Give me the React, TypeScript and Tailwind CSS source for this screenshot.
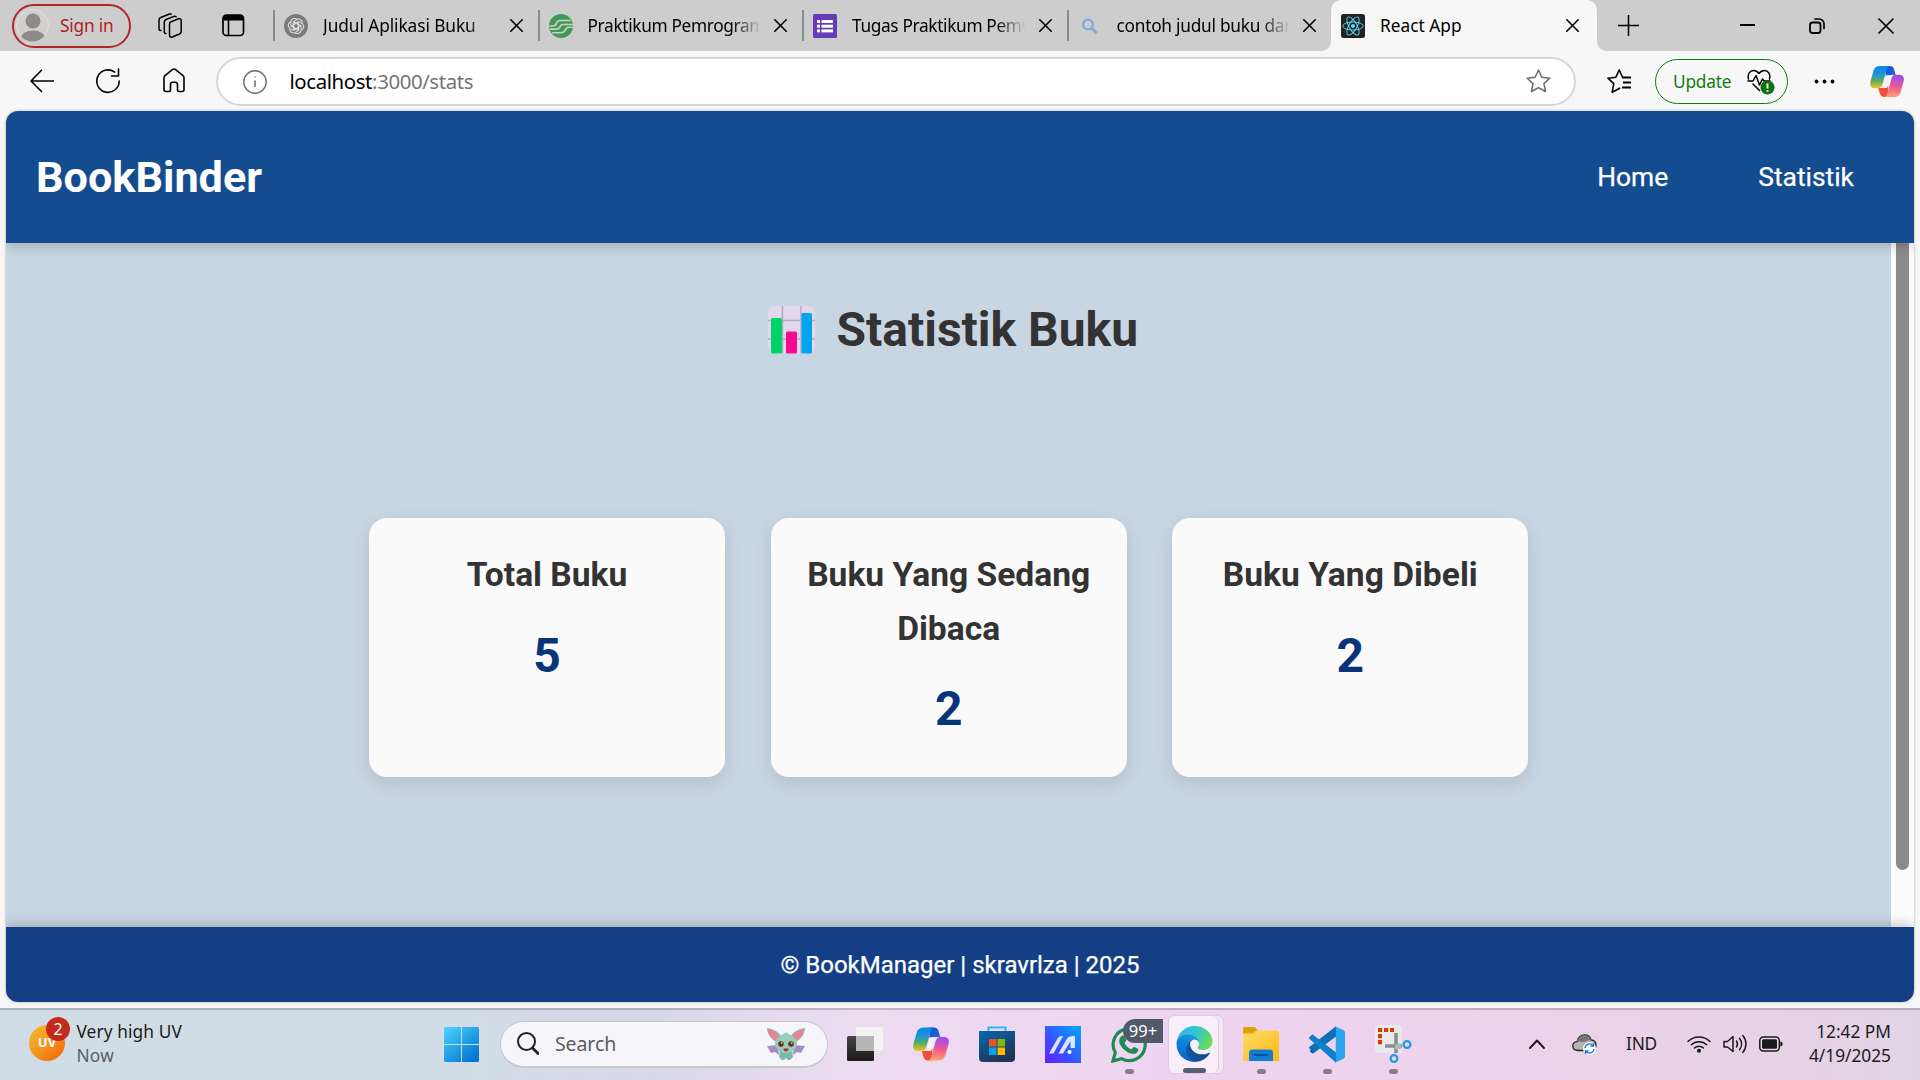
import React from 'react';

const stroke = { fill: 'none', stroke: '#000', strokeWidth: 1.6, strokeLinecap: 'round' as const, strokeLinejoin: 'round' as const };

function Cross({ s = 13, w = 1.6 }: { s?: number; w?: number }) {
  return (
    <svg width={s} height={s} viewBox="0 0 13 13" className="shrink-0">
      <path d="M.8.8 12.2 12.2M12.2.8.8 12.2" {...stroke} strokeWidth={w} />
    </svg>
  );
}

function Copilot({ id, className }: { id: string; className: string }) {
  return (
    <svg viewBox="0 0 34 31" className={className}>
      <defs>
        <linearGradient id={id + 'a'} x1="0" y1="0" x2="0" y2="1">
          <stop offset="0" stopColor="#0a86e0" />
          <stop offset=".35" stopColor="#1b93dd" />
          <stop offset=".65" stopColor="#55ab6a" />
          <stop offset="1" stopColor="#f5c518" />
        </linearGradient>
        <linearGradient id={id + 'b'} x1=".2" y1="0" x2=".1" y2="1">
          <stop offset="0" stopColor="#9e4be8" />
          <stop offset=".5" stopColor="#ee5a90" />
          <stop offset="1" stopColor="#ffa764" />
        </linearGradient>
        <linearGradient id={id + 'c'} x1="0" y1="0" x2="1" y2="1">
          <stop offset="0" stopColor="#0f4fd0" />
          <stop offset="1" stopColor="#2a6be0" />
        </linearGradient>
      </defs>
      <path d="M15 0h5c2.600 0 3.600 1.600 4.300 3.900L25.700 9h-5c-2.500 0-4 .9-4.700 3.500Z" fill={`url(#${id}c)`} />
      <path d="M19 31h-5c-2.600 0-3.600-1.600-4.300-3.900L8.300 22h5c2.500 0 4-.9 4.700-3.500Z" fill="#ee4f3a" />
      <path d="M10 0h10c-2 .4-3 2-3.700 4.500l-3.500 13c-.9 3.300-2.200 4.700-5 4.700H4.500C1 22.200-.6 19.500.4 15.500l3-10.500C4.300 1.800 6.500 0 10 0Z" fill={`url(#${id}a)`} />
      <path d="M24 31H14c2-.4 3-2 3.700-4.500l3.500-13c.9-3.300 2.200-4.700 5-4.700h3.300c3.500 0 5.100 2.700 4.100 6.700l-3 10.500C29.700 29.200 27.500 31 24 31Z" fill={`url(#${id}b)`} />
      <path d="M16.800 9.200h2.700c.8 0 1.200.5 1 1.200l-3 10.600c-.2.700-.6 1-1.300 1h-2.700c-.7 0-1-.5-.8-1.200l3-10.600c.2-.7.500-1 1.100-1Z" fill="#f5f0fa" />
    </svg>
  );
}

function GptIcon() {
  return (
    <svg width="24" height="24" viewBox="0 0 24 24">
      <circle cx="12" cy="12" r="12" fill="#7b7b7b" />
      <g fill="none" stroke="#dedede" strokeWidth="1.05">
        {[0, 60, 120, 180, 240, 300].map((a) => (
          <path key={a} transform={`rotate(${a} 12 12)`} d="M9.300 13.600V7.800L12.700 5.600c2.700-1.500 6 .6 5.600 3.900M9.300 7.800 14.500 10.700" />
        ))}
      </g>
    </svg>
  );
}

function CampusIcon() {
  return (
    <svg width="24" height="24" viewBox="0 0 24 24">
      <circle cx="12" cy="12" r="12" fill="#3f9a56" />
      <g fill="none" stroke="#cdcdcd" strokeWidth="1.600">
        <path d="M22 6.500H12c-3 0-4 1-4.500 2.800S6 12 3.500 12H0" />
        <path d="M24 10.500h-9.500c-2.500 0-3 .8-3.500 2.300s-1.500 2.300-4 2.300H1" />
        <path d="M24 13.300h-4c-2.500 0-3 .8-3.500 2.500s-2 2.900-4.500 2.900H3" />
      </g>
    </svg>
  );
}

function FormsIcon() {
  return (
    <svg width="24" height="24" viewBox="0 0 24 24">
      <rect width="24" height="24" rx="1.500" fill="#673ab7" />
      <g fill="#fff">
        {[6, 10.700, 15.400].map((y) => (
          <g key={y}>
            <rect x="4" y={y} width="3" height="3" />
            <rect x="8.500" y={y} width="11.500" height="3" />
          </g>
        ))}
      </g>
    </svg>
  );
}

function ReactIcon() {
  return (
    <svg width="24" height="24" viewBox="0 0 24 24">
      <rect width="24" height="24" rx="2.500" fill="#222" />
      <g fill="none" stroke="#61dafb" strokeWidth=".9">
        {[0, 60, 120].map((a) => (
          <ellipse key={a} cx="12" cy="12" rx="10.300" ry="4" transform={`rotate(${a} 12 12)`} />
        ))}
      </g>
      <circle cx="12" cy="12" r="2" fill="#61dafb" />
    </svg>
  );
}

function SearchFavicon() {
  return (
    <svg width="24" height="24" viewBox="0 0 24 24">
      <circle cx="10" cy="10.500" r="4.900" fill="none" stroke="#7fabd6" strokeWidth="2.200" />
      <path d="m13.500 14 5.200 5.200" stroke="#7fabd6" strokeWidth="2.800" />
    </svg>
  );
}

const tabs = [
  { title: 'Judul Aplikasi Buku', icon: <GptIcon />, track: 'tracking-[-0.08px]' },
  { title: 'Praktikum Pemrogram', icon: <CampusIcon />, track: 'tracking-[-0.35px]' },
  { title: 'Tugas Praktikum Pemw', icon: <FormsIcon />, track: 'tracking-[-0.35px]' },
  { title: 'contoh judul buku dan', icon: <SearchFavicon />, track: 'tracking-[-0.25px]' },
];

function TabStrip() {
  return (
    <div className="flex h-[51px] bg-[#cdcdcd] text-[17.300px] text-black">
      <div className="flex w-[273px] shrink-0 items-center pl-3">
        <div className="flex h-[44px] w-[119px] items-center rounded-full border-2 border-[#b3272b] pl-[3px] text-[#ad1f24]">
          <svg className="-ml-[1px]" width="33" height="33" viewBox="0 0 33 33">
            <defs><clipPath id="av"><circle cx="16.500" cy="16.500" r="16" /></clipPath></defs>
            <circle cx="16.500" cy="16.500" r="16" fill="#d2d0ce" stroke="#e3e1df" />
            <g clipPath="url(#av)" fill="#8d8a88">
              <circle cx="17" cy="12" r="7.500" />
              <ellipse cx="17" cy="29" rx="12" ry="7.500" />
            </g>
          </svg>
          <span className="ml-[11px] whitespace-nowrap tracking-[-0.2px]">Sign in</span>
        </div>
        <svg className="ml-[27px]" width="24" height="26" viewBox="0 0 24 26">
          <g {...stroke} strokeWidth="1.500">
            <path d="m12.500 9 8-3.200c1.500-.5 2.700.2 2.700 1.700v11c0 1.200-.5 2-1.700 2.500l-7.200 3c-1.600.6-2.800-.1-2.800-1.700V11c0-1 .3-1.600 1-2Z" />
            <path d="M8 20.500c-1 0-1.700-.7-1.700-1.800V9c0-1.200.5-2 1.700-2.500L16 3.400c.8-.3 1.600-.1 2.100.4" />
            <path d="M3 17.500c-1.300 0-2-.7-2-1.800V7c0-1.200.5-2 1.700-2.500L11.500 1c.7-.2 1.200-.1 1.700.2" />
          </g>
        </svg>
        <svg className="ml-[40px]" width="23" height="23" viewBox="0 0 23 23">
          <rect x="1" y="1" width="20.500" height="20.500" rx="3.500" {...stroke} strokeWidth="1.700" />
          <path d="M1 6.500V4a3 3 0 0 1 3-3h14.500a3 3 0 0 1 3 3v2.500Z" fill="#000" />
          <path d="M6.500 6v15" {...stroke} />
        </svg>
      </div>
      {tabs.map((t) => (
        <div key={t.title} className="flex w-[264.500px] shrink-0 items-center">
          <div className="h-[31px] w-[2px] bg-[#8a8a8a]" />
          <div className="ml-[9px] w-[24px]">{t.icon}</div>
          <div className={`ml-[15px] w-[175px] overflow-hidden whitespace-nowrap [mask-image:linear-gradient(to_right,#000_82%,transparent_99%)] ${t.track}`}>{t.title}</div>
          <div className="ml-[11.500px]"><Cross /></div>
        </div>
      ))}
      <div className="relative flex w-[266px] shrink-0 items-center rounded-t-[10px] bg-[#f7f7f7] pl-[10px]">
        <div className="absolute bottom-0 -left-[10px] h-[10px] w-[10px] bg-[radial-gradient(circle_at_0_0,transparent_9.500px,#f7f7f7_10.500px)]" />
        <div className="absolute -right-[10px] bottom-0 h-[10px] w-[10px] bg-[radial-gradient(circle_at_100%_0,transparent_9.500px,#f7f7f7_10.500px)]" />
        <ReactIcon />
        <div className="ml-[15px] w-[186px]">React App</div>
        <Cross />
      </div>
      <div className="flex flex-1 items-center">
        <svg className="-mt-[1px] ml-[21px]" width="21" height="21" viewBox="0 0 21 21"><path d="M10.500 0v21M0 10.500h21" stroke="#000" strokeWidth="1.500" /></svg>
        <div className="-mt-[1px] ml-[101px] h-[2px] w-[15px] bg-black" />
        <svg className="ml-[54px]" width="16" height="16" viewBox="0 0 16 16">
          <rect x="1" y="4.500" width="10.500" height="10.500" rx="2.500" {...stroke} strokeWidth="1.800" />
          <path d="M6 1h4a5 5 0 0 1 5 5v4.500" {...stroke} strokeWidth="1.700" />
        </svg>
        <div className="ml-[53px]"><Cross s={16} w={1.400} /></div>
      </div>
    </div>
  );
}

function Toolbar() {
  return (
    <div className="flex h-[60px] items-center bg-[#f7f7f7]">
      <div className="-mt-[1px] flex w-[216px] shrink-0 items-center pl-[30px]">
        <svg width="24" height="24" viewBox="0 0 24 24"><path d="M23.500 12H1M11.500 1.200 1 12l10.500 10.500" {...stroke} /></svg>
        <svg className="ml-[42px]" width="24" height="26" viewBox="0 0 24 26">
          <path d="M18.500 4A11.200 11.200 0 1 0 23.200 13" {...stroke} /><path d="M22.500 1v7h-7" {...stroke} />
        </svg>
        <svg className="ml-[43px]" width="22" height="25" viewBox="0 0 22 25">
          <path d="M1 9.800c0-.9.300-1.500 1-2.100l7.400-6.100c1-.8 2.200-.8 3.200 0L20 7.700c.7.600 1 1.200 1 2.100v11.700c0 1.300-.8 2-2 2h-3c-1 0-1.500-.6-1.500-1.500v-5.500c0-1.300-.8-2.200-2-2.200h-3c-1.200 0-2 .9-2 2.200V22c0 .9-.5 1.500-1.500 1.500H3c-1.200 0-2-.7-2-2Z" {...stroke} />
        </svg>
      </div>
      <div className="mt-[1px] flex h-[49px] w-[1360px] shrink-0 items-center rounded-full border-2 border-[#d6d6d6] bg-white">
        <svg className="ml-[25px]" width="24" height="24" viewBox="0 0 24 24">
          <circle cx="12" cy="12" r="11.200" {...stroke} stroke="#707070" strokeWidth="1.400" />
          <path d="M12 10.500V17M12 6.500v1" stroke="#707070" strokeWidth="1.600" />
        </svg>
        <div className="ml-[22.500px] w-[1236.500px] text-[20.400px] tracking-[-0.4px] text-[#757575]"><span className="text-black">localhost</span>:3000/stats</div>
        <svg className="-mt-[2px]" width="25" height="24" viewBox="0 0 25 24"><path d="m12.500 1 3.300 7.200 8 1-5.900 5.400 1.600 7.900-7-3.900-7 3.900L7 14.600 1.200 9.200l8-1Z" {...stroke} stroke="#6a6a6a" strokeWidth="1.500" /></svg>
      </div>
      <svg className="ml-[31px]" width="25" height="25" viewBox="0 0 25 25">
        <path d="m15.500 8-3.300-7-3.300 7.200-8 1 5.900 5.400-1.600 8.600 7.500-4" {...stroke} strokeWidth="1.600" />
        <path d="M15 8.500h9M16 13.500h8M15 18.500h9" stroke="#000" strokeWidth="1.800" />
      </svg>
      <div className="mt-[1px] ml-[23px] flex h-[45px] w-[133px] items-center rounded-full border-[1.500px] border-[#107c10] pl-[17px] text-[17.300px] text-[#107c10]">
        <span className="mt-[1px] w-[74px] tracking-[-0.2px]">Update</span>
        <svg width="28" height="26" viewBox="0 0 28 26">
          <g {...stroke} strokeWidth="1.500">
            <path d="M1.500 10C.2 5 3 1.500 6.500 1.500c2.500 0 4 1 5.500 3 1.500-2 3-3 5.500-3C21 1.500 23.800 5 22.500 10" />
            <path d="M1 12h5l3-5.500L12.500 16l3-6 1.500 2h6M6 15l6.500 6.500" />
          </g>
          <circle cx="20.500" cy="18.500" r="7" fill="#0f7010" />
          <path d="M20.500 14.500v5M20.500 21v1.700" stroke="#fff" strokeWidth="1.900" />
        </svg>
      </div>
      <svg className="ml-[26px]" width="21" height="5" viewBox="0 0 21 5"><circle cx="2.500" cy="2.500" r="1.900" /><circle cx="10.500" cy="2.500" r="1.900" /><circle cx="18.500" cy="2.500" r="1.900" /></svg>
      <Copilot id="top" className="ml-[35px] h-[31px] w-[34px]" />
    </div>
  );
}

function Card({ title, value }: { title: React.ReactNode; value: number }) {
  return (
    <div className="w-[356.200px] rounded-[18px] bg-[#fafafa] pt-[30px] pb-[29.500px] text-center shadow-[0_6px_18px_rgba(0,0,0,0.1)]">
      <h3 className="mb-[15px] text-[33.600px] leading-[53.600px] font-bold text-[#333]">{title}</h3>
      <p className="text-[48px] leading-[77px] font-bold text-[#08357a]">{value}</p>
    </div>
  );
}

function ChartEmoji() {
  return (
    <svg width="47" height="48" viewBox="0 0 47 48">
      <rect width="47" height="47.500" rx="6.500" fill="#e1d8ec" />
      <path d="M14.500 0v47.500M33 0v47.500M0 14.500h47M0 33h47" stroke="#b5a9c4" strokeWidth="1.500" />
      <rect x="3" y="12" width="11" height="35.500" rx="1.500" fill="#00d26a" />
      <rect x="18" y="25.500" width="11" height="22" rx="1.500" fill="#f70a8d" />
      <rect x="33.500" y="7" width="10.500" height="40.500" rx="1.500" fill="#00a6ed" />
    </svg>
  );
}

function Page() {
  return (
    <div className="mx-[6px] flex h-[891px] flex-col overflow-hidden rounded-[12px] font-[Roboto,sans-serif] shadow-[0_0_3px_rgba(0,0,0,0.3)]">
      <header className="z-10 flex h-[132px] shrink-0 items-center justify-between bg-[#144d8f] pt-[2px] pr-[60px] pl-[30px] text-white shadow-[0_3px_12px_rgba(0,0,0,0.2)]">
        <div className="text-[43.200px] font-bold">BookBinder</div>
        <nav className="flex gap-[90px] text-[26.400px] [-webkit-text-stroke:0.25px_white]"><a>Home</a><a>Statistik</a></nav>
      </header>
      <div className="flex flex-1">
        <main className="w-[1885px] bg-[#c8d5e2]">
          <h1 className="mt-[48px] ml-[762px] flex h-[77px] items-center text-[48px] font-bold whitespace-nowrap text-[#333]">
            <ChartEmoji />
            <span className="ml-[21.500px]">Statistik Buku</span>
          </h1>
          <div className="mt-[150px] ml-[363px] flex gap-[45.400px]">
            <Card title="Total Buku" value={5} />
            <Card title={<>Buku Yang Sedang<br />Dibaca</>} value={2} />
            <Card title="Buku Yang Dibeli" value={2} />
          </div>
        </main>
        <div className="flex flex-1 bg-[#fcfcfc] pl-[5px]"><div className="h-[627px] w-[13px] rounded-b-full bg-[#8b8b8b]" /></div>
      </div>
      <footer className="z-10 flex h-[75px] shrink-0 items-center justify-center bg-[#143f85] text-[24px] text-white shadow-[0_-3px_12px_rgba(0,0,0,0.2)] [-webkit-text-stroke:0.25px_white]">© BookManager | skravrlza | 2025</footer>
    </div>
  );
}

function WindowsLogo() {
  return (
    <svg width="35" height="35" viewBox="0 0 35 35">
      <defs><linearGradient id="win" gradientUnits="userSpaceOnUse" x1="0" y1="0" x2="28" y2="35"><stop stopColor="#4fd4ff" /><stop offset="1" stopColor="#0074d0" /></linearGradient></defs>
      <g fill="url(#win)"><path d="M1.500 0H17v17H0V1.500A1.500 1.500 0 0 1 1.500 0Z" /><path d="M18 0h15.500A1.500 1.500 0 0 1 35 1.500V17H18Z" /><path d="M0 18h17v17H1.500A1.500 1.500 0 0 1 0 33.500Z" /><path d="M18 18h17v15.500a1.500 1.500 0 0 1-1.500 1.500H18Z" /></g>
    </svg>
  );
}

function Creature() {
  return (
    <svg width="38" height="32" viewBox="0 0 38 32">
      <path d="m11 17-11 1 4 7 4-1 4 3ZM27 17l11 1-4 7-4-1-4 3Z" fill="#a58cc4" />
      <path d="M0 0c7 1 12 4 14 8l-5 6C4 11 0 6 0 0ZM38 0c-7 1-12 4-14 8l5 6c5-3 9-8 9-14Z" fill="#8bbcae" />
      <path d="M1 1c6 1 10 4 11 8l-3 4C5 10 1 6 1 1ZM37 1c-6 1-10 4-11 8l3 4c4-3 8-7 8-12Z" fill="#ee8095" />
      <path d="M13 22h12l1 7-3 3h-2l-2-2-2 2h-2l-3-3Z" fill="#79b8a8" />
      <path d="M19 4c1.500 2 11 5 11 11s-5 10-11 10S8 21 8 15 17.500 6 19 4Z" fill="#96cdbc" />
      <circle cx="14" cy="16" r="2.800" fill="#6b2d17" /><circle cx="24" cy="16" r="2.800" fill="#6b2d17" />
      <circle cx="14.800" cy="15" r=".8" fill="#fff" /><circle cx="24.800" cy="15" r=".8" fill="#fff" />
      <path d="M16.500 20.500h5c0 2-1 3-2.500 3s-2.500-1-2.500-3Z" fill="#b9243c" />
    </svg>
  );
}

function TaskView() {
  return (
    <svg width="36" height="34" viewBox="0 0 36 34">
      <defs><linearGradient id="tv" x1="0" y1="0" x2="0" y2="1"><stop stopColor="#484644" /><stop offset="1" stopColor="#1b1a19" /></linearGradient></defs>
      <rect y="9" width="27" height="25" rx="1.500" fill="url(#tv)" />
      <path d="M10.500 0h24A1.500 1.500 0 0 1 36 1.500V24H27V9H9V1.500A1.500 1.500 0 0 1 10.500 0Z" fill="#f3f2f3" />
      <path d="M9 9h18v15H9Z" fill="#b7b6b7" />
    </svg>
  );
}

function Store() {
  return (
    <svg width="36" height="36" viewBox="0 0 36 36">
      <defs><linearGradient id="st" x1="0" y1="0" x2=".6" y2="1"><stop stopColor="#0669b4" /><stop offset="1" stopColor="#213253" /></linearGradient></defs>
      <path d="M9.500 7V1.500h17V7" fill="none" stroke="#2cb7f0" strokeWidth="2" />
      <path d="M0 5h36v27a4 4 0 0 1-4 4H4a4 4 0 0 1-4-4Z" fill="url(#st)" />
      <path d="M10 13h7.500v7.500H10Z" fill="#f25022" /><path d="M18.500 13H26v7.500h-7.500Z" fill="#7fba00" />
      <path d="M10 21.500h7.500V29H10Z" fill="#00a4ef" /><path d="M18.500 21.500H26V29h-7.500Z" fill="#ffb900" />
    </svg>
  );
}

function MyAsus() {
  return (
    <svg width="36" height="37" viewBox="0 0 36 37">
      <defs><linearGradient id="ma" x1="0" y1="1" x2="1" y2="0"><stop stopColor="#6a1cff" /><stop offset=".4" stopColor="#3a50ff" /><stop offset="1" stopColor="#00aaff" /></linearGradient></defs>
      <rect width="36" height="37" fill="url(#ma)" />
      <path d="m4 27.500 8-14c1.500-2.500 2.500-3.500 6-3.500L8.500 27.500ZM13.500 27.500l8-14c1.500-2.500 3-3.500 8.500-3.500v12h-4.500v-7L18 27.500Z" fill="#dfe3ff" />
      <circle cx="24.500" cy="26" r="2.100" fill="#fff" />
    </svg>
  );
}

function WhatsApp() {
  return (
    <svg width="36" height="37" viewBox="0 0 36 37">
      <path d="M2 35 4.300 26.500A16 16 0 1 1 10.500 32.600Z" fill="none" stroke="#1e8c52" strokeWidth="3.200" />
      <path d="M10 10.500c1.500-1.500 3-1.300 3.800.3l1.400 3.300c.4 1-1.500 2.500-1.500 3.100 1.300 2.600 3.500 4.700 6.500 6 .8 0 2.200-2.600 3.200-2.200l3.400 1.700c1 .6.500 3-1.300 4.200-2 1.400-4.500 1.300-8.300-.5-4.500-2.200-8-6.500-8.800-9.600-.5-2.500 0-4.700 1.600-6.300Z" fill="#1e8c52" />
    </svg>
  );
}

function Edge() {
  return (
    <svg width="37" height="37" viewBox="0 0 256 256">
      <defs>
        <linearGradient id="e1" x1="0" y1="0" x2="1" y2="0"><stop stopColor="#0c59a4" /><stop offset="1" stopColor="#114a8b" /></linearGradient>
        <linearGradient id="e2" x1=".6" y1="0" x2=".2" y2="1"><stop stopColor="#1b9de2" /><stop offset=".5" stopColor="#0a7dd6" /><stop offset="1" stopColor="#0c62bf" /></linearGradient>
        <linearGradient id="e3" x1="0" y1=".3" x2="1" y2=".6"><stop stopColor="#2fb4ea" /><stop offset=".5" stopColor="#35c5cb" /><stop offset="1" stopColor="#6be04e" /></linearGradient>
      </defs>
      <path fill="url(#e1)" d="M231 190.500c-3.400 1.800-6.900 3.400-10.500 4.700a101.900 101.900 0 0 1-35.900 6.500c-47.300 0-88.500-32.500-88.500-74.300a31.500 31.500 0 0 1 16.400-27.300c-42.800 1.800-53.800 46.400-53.800 72.500 0 74 68.100 81.400 82.800 81.400 7.900 0 19.800-2.300 27-4.600l1.300-.4a128.300 128.300 0 0 0 66.600-52.800 4 4 0 0 0-5.400-5.700Z" />
      <path fill="url(#e2)" d="M105.700 241.400a79.200 79.200 0 0 1-22.700-21.300 80.700 80.700 0 0 1 29.500-120c3.200-1.500 8.500-4.200 15.600-4.100a32.400 32.400 0 0 1 25.700 13 31.900 31.900 0 0 1 6.300 18.700c0-.2 24.500-79.600-80-79.600-43.900 0-80 41.600-80 78.200a130.200 130.200 0 0 0 12.100 56 128 128 0 0 0 156.400 67 75.500 75.500 0 0 1-62.800-8Z" />
      <path fill="url(#e3)" d="M152.300 148.900c-.8 1-3.300 2.500-3.300 5.700 0 2.600 1.700 5.100 4.700 7.200 14.400 10 41.500 8.700 41.600 8.700 10.700 0 21.100-2.900 30.300-8.300A61.400 61.400 0 0 0 256 109.200c.3-22.400-8-37.300-11.300-43.900C223.500 23.900 177.700 0 128 0A128 128 0 0 0 0 126.200c.5-36.500 36.800-66 80-66 3.500 0 23.500.3 42 10a72.600 72.600 0 0 1 30.900 29.300c6.100 10.600 7.200 24.100 7.200 29.500s-2.700 13.300-7.800 19.900Z" />
    </svg>
  );
}

function Folder() {
  return (
    <svg width="36" height="34" viewBox="0 0 36 34">
      <defs><linearGradient id="fo" x1="0" y1="0" x2="1" y2="1"><stop stopColor="#ffdc6a" /><stop offset="1" stopColor="#fdb813" /></linearGradient></defs>
      <path d="M1.500 0h9c1 0 1.500.3 2.200 1L15 3.500 11 8H0V1.500Q0 0 1.500 0Z" fill="#dfa00c" />
      <path d="M13.500 3.500H34.500A1.500 1.500 0 0 1 36 5v29H0V6.500h10Z" fill="url(#fo)" />
      <path d="M6 34v-8a3.500 3.500 0 0 1 3.500-3.500h17A3.500 3.500 0 0 1 30 26v8Z" fill="#127cd2" />
      <path d="M11.500 28h13" stroke="#0b4f97" strokeWidth="2" strokeLinecap="round" />
    </svg>
  );
}

function VsCode() {
  return (
    <svg width="36" height="37" viewBox="0 0 36 37">
      <path d="M26 .5 2.200 24.200 .4 22.600c-.5-.5-.5-1.200 0-1.700L27 .3v10.200L4.500 27.200c-.5.400-1.100.4-1.600 0L.5 25Z" fill="#0f6fb5" />
      <path d="M27 36.700.4 12.800c-.5-.5-.5-1.200 0-1.700l2.300-2.200c.5-.4 1.100-.4 1.600 0L27 26.500Z" fill="#0f80cc" />
      <path d="m25.500 0 9 4.200A2.500 2.500 0 0 1 36 6.500v24a2.500 2.500 0 0 1-1.500 2.300l-9 4.200c.8-.5 1.300-1.300 1.300-2.200V2.200c0-.9-.5-1.700-1.300-2.200Z" fill="#2aa3f2" />
    </svg>
  );
}

function Snip() {
  return (
    <svg width="37" height="38" viewBox="0 0 37 38">
      <rect x="0" y="0" width="27" height="28" rx="3" fill="#e9e9ec" />
      <path d="M3 5h16M5 9v11" fill="none" stroke="#d83b01" strokeWidth="4" strokeDasharray="4.200 1.800" />
      <path d="M21 8v20M10 21h17" stroke="#8a8d91" strokeWidth="3.600" />
      <path d="m20 22 6-1" stroke="#b5b8bb" strokeWidth="5" />
      <circle cx="32" cy="19.500" r="3.400" fill="none" stroke="#1f9be4" strokeWidth="2.200" />
      <circle cx="19" cy="33.500" r="3.400" fill="none" stroke="#1f9be4" strokeWidth="2.200" />
    </svg>
  );
}

function TaskItem({ children, running }: { children: React.ReactNode; running?: boolean }) {
  return (
    <div className="relative flex h-[72px] w-[66px] shrink-0 items-center justify-center">
      {children}
      {running && <div className="absolute bottom-[6px] left-[29px] h-[5px] w-[9px] rounded-full bg-[#8a7b8b]" />}
    </div>
  );
}

function Taskbar() {
  return (
    <div className="flex h-[72px] items-center border-t-2 border-[#00000030] bg-[linear-gradient(90deg,#d0dde6_0%,#d0dde6_24%,#d8d8eb_34%,#eedcf2_45%,#eed4f0_60%,#ecd2ea_80%,#e6d2e6_95%,#e2d4e6_100%)] bg-origin-border pb-[2px] text-[17.300px] text-[#1b1b1b]">
      <div className="flex w-[444px] shrink-0 items-center pl-[29px]">
        <div className="relative -mt-[3px] flex h-[36px] w-[36px] items-center justify-center rounded-full bg-linear-to-br from-[#efc12f] to-[#f2600c] text-[13px] font-bold text-white">
          UV
          <div className="absolute -top-[8px] -right-[5px] flex h-[24px] w-[24px] items-center justify-center rounded-full bg-[#c42b1c] text-[16px] font-normal text-white">2</div>
        </div>
        <div className="ml-[11.500px] leading-[24px] whitespace-nowrap"><div className="tracking-[0.1px]">Very high UV</div><div className="tracking-[0.2px] text-[#5a5f63]">Now</div></div>
      </div>
      <WindowsLogo />
      <div className="ml-[21px] flex h-[47px] w-[328px] shrink-0 items-center rounded-full border-[1.500px] border-b-2 border-[#c5c7d3] bg-[#f5f5fa] pl-[16px]">
        <svg width="22" height="23" viewBox="0 0 22 23"><circle cx="9.500" cy="9.500" r="8.500" fill="none" stroke="#222" strokeWidth="2" /><path d="m15.500 16 5.500 5.500" stroke="#222" strokeWidth="2.800" strokeLinecap="round" /></svg>
        <span className="mt-[1px] ml-[16px] w-[212px] text-[19.500px] tracking-[-0.1px] text-[#5c5c5e]">Search</span>
        <Creature />
      </div>
      <div className="ml-[4px] flex">
        <TaskItem><TaskView /></TaskItem>
        <TaskItem><Copilot id="bar" className="h-[34px] w-[36px]" /></TaskItem>
        <TaskItem><Store /></TaskItem>
        <TaskItem><MyAsus /></TaskItem>
        <TaskItem running>
          <WhatsApp />
          <div className="absolute top-[11px] left-[27px] flex h-[24px] w-[40px] items-center justify-center rounded-l-full rounded-r-[9px] bg-[#505a68] text-[16.500px] text-white">99+</div>
        </TaskItem>
        <div className="flex h-[72px] w-[66px] items-center justify-center pl-[1px]">
          <div className="flex h-[59px] w-[56px] rounded-[6px] border border-[#dccbe3] bg-[#f4e6f6]">
            <div className="flex w-[50px] flex-col items-center rounded-[6px] border-r border-[#dccbe3] bg-[#f8eefa] pt-[10px] pl-[2px]">
              <Edge />
              <div className="mt-[6px] h-[5px] w-[23px] shrink-0 rounded-full bg-[#56606e]" />
            </div>
          </div>
        </div>
        <TaskItem running><Folder /></TaskItem>
        <TaskItem running><VsCode /></TaskItem>
        <TaskItem running><Snip /></TaskItem>
      </div>
      <div className="flex flex-1 items-center justify-end pr-[29px]">
        <svg width="16" height="10" viewBox="0 0 16 10"><path d="m1 9 7-7.500L15 9" {...stroke} stroke="#1b1b1b" strokeWidth="1.900" /></svg>
        <svg className="ml-[27px]" width="25" height="21" viewBox="0 0 25 21">
          <path d="M6 16.500C2.500 16.500.8 14.500.8 12s1.700-4.200 4.200-4.400C6.500 3 9.500 1 12.500 1c3.200 0 5.700 2 6.500 4.800 3 .2 5 2.200 5 5.200s-2 5.500-5 5.500Z" fill="#b4b4b4" stroke="#222" strokeWidth="1.300" />
          <path d="M5 7.600C6.500 3 9.500 1 12.500 1c3.200 0 5.700 2 6.500 4.800-3 .5-4 2-8 2.200Z" fill="#777" />
          <circle cx="17.500" cy="14.500" r="6.500" fill="#fff" />
          <path d="M13 14a4.600 4.600 0 0 1 8-2.500M22 15a4.600 4.600 0 0 1-8 2.500M21.500 9v3h-3M13.500 20v-3h3" fill="none" stroke="#1a74d4" strokeWidth="1.300" />
        </svg>
        <span className="ml-[29px] w-[32px] tracking-[-0.2px]">IND</span>
        <svg className="ml-[29px]" width="24" height="18" viewBox="0 0 24 18">
          <g {...stroke} stroke="#1b1b1b" strokeWidth="1.500"><path d="M1 6.500a15.500 15.500 0 0 1 22 0M4.300 9.800a11 11 0 0 1 15.400 0M7.500 13a6.400 6.400 0 0 1 9 0" /></g>
          <circle cx="12" cy="15.700" r="2" fill="#1b1b1b" />
        </svg>
        <svg className="ml-[12px]" width="24" height="20" viewBox="0 0 24 20"><g {...stroke} stroke="#1b1b1b" strokeWidth="1.500"><path d="M1 7.500h3.500L10 2.500v15L4.500 13H1ZM13.500 7c1.200 1.800 1.200 4.200 0 6M16.500 4.300c2.700 3.400 2.700 8 0 11.400M19.800 1.500c4.200 5 4.200 12 0 17" /></g></svg>
        <svg className="ml-[12px]" width="24" height="16" viewBox="0 0 24 16"><rect x=".8" y="1" width="19.500" height="14" rx="3.500" {...stroke} stroke="#1b1b1b" strokeWidth="1.500" /><rect x="3" y="3.300" width="15" height="9.400" rx="1.500" fill="#1b1b1b" /><path d="M21.300 5.500c1.500.3 2.300 1 2.300 2.500s-.8 2.200-2.300 2.500Z" fill="#1b1b1b" /></svg>
        <div className="ml-[25px] w-[83px] text-right leading-[24px] whitespace-nowrap"><div>12:42 PM</div><div>4/19/2025</div></div>
      </div>
    </div>
  );
}

export default function App() {
  return (
    <div className="flex h-[1080px] w-[1920px] flex-col overflow-hidden bg-[#f7f7f7] font-['Noto_Sans','Open_Sans',sans-serif]">
      <TabStrip />
      <Toolbar />
      <Page />
      <div className="h-[6px] shrink-0" />
      <Taskbar />
    </div>
  );
}
